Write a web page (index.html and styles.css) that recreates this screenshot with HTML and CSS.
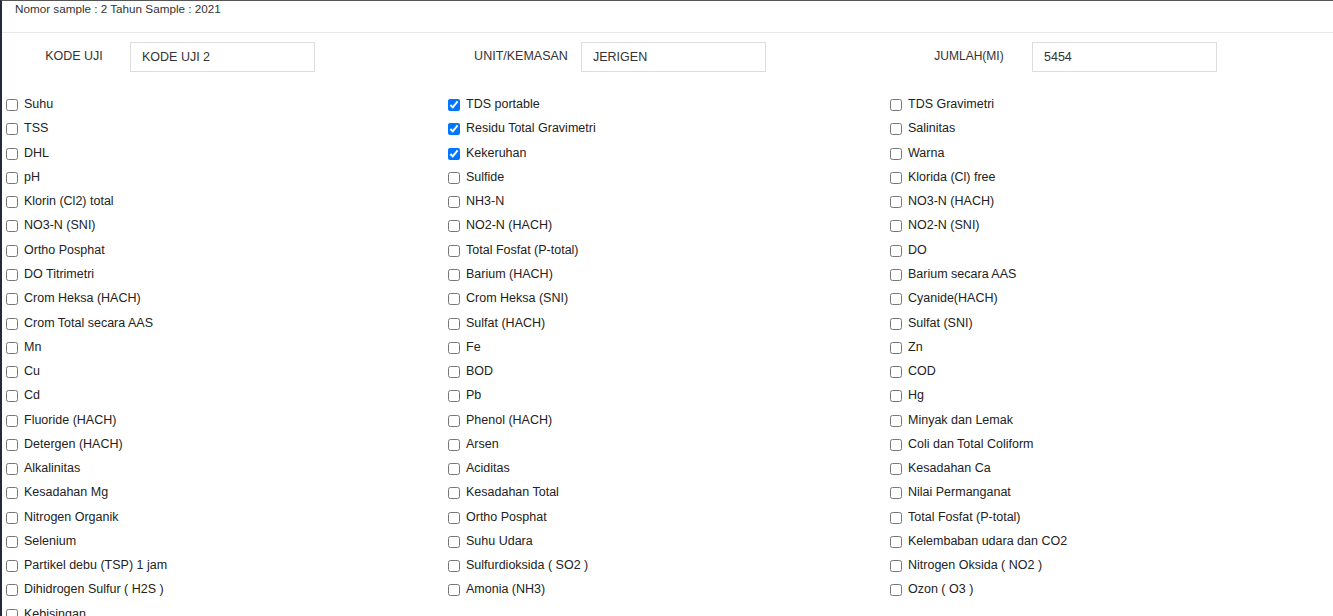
FILE: index.html
```html
<!DOCTYPE html>
<html>
<head>
<meta charset="utf-8">
<link rel="stylesheet" href="styles.css">
</head>
<body>
<div class="modal">
  <div class="modal-head">Nomor sample : 2 Tahun Sample : 2021</div>
  <div class="form-row">
    <div class="group"><span class="lbl">KODE UJI</span><input class="field" type="text" value="KODE UJI 2"></div>
    <div class="group group-mid"><span class="lbl">UNIT/KEMASAN</span><input class="field" type="text" value="JERIGEN"></div>
    <div class="group group-end"><span class="lbl">JUMLAH(MI)</span><input class="field" type="text" value="5454"></div>
  </div>
  <div class="checks">
    <label class="item"><input type="checkbox">Suhu</label>
    <label class="item"><input type="checkbox" checked>TDS portable</label>
    <label class="item"><input type="checkbox">TDS Gravimetri</label>
    <label class="item"><input type="checkbox">TSS</label>
    <label class="item"><input type="checkbox" checked>Residu Total Gravimetri</label>
    <label class="item"><input type="checkbox">Salinitas</label>
    <label class="item"><input type="checkbox">DHL</label>
    <label class="item"><input type="checkbox" checked>Kekeruhan</label>
    <label class="item"><input type="checkbox">Warna</label>
    <label class="item"><input type="checkbox">pH</label>
    <label class="item"><input type="checkbox">Sulfide</label>
    <label class="item"><input type="checkbox">Klorida (Cl) free</label>
    <label class="item"><input type="checkbox">Klorin (Cl2) total</label>
    <label class="item"><input type="checkbox">NH3-N</label>
    <label class="item"><input type="checkbox">NO3-N (HACH)</label>
    <label class="item"><input type="checkbox">NO3-N (SNI)</label>
    <label class="item"><input type="checkbox">NO2-N (HACH)</label>
    <label class="item"><input type="checkbox">NO2-N (SNI)</label>
    <label class="item"><input type="checkbox">Ortho Posphat</label>
    <label class="item"><input type="checkbox">Total Fosfat (P-total)</label>
    <label class="item"><input type="checkbox">DO</label>
    <label class="item"><input type="checkbox">DO Titrimetri</label>
    <label class="item"><input type="checkbox">Barium (HACH)</label>
    <label class="item"><input type="checkbox">Barium secara AAS</label>
    <label class="item"><input type="checkbox">Crom Heksa (HACH)</label>
    <label class="item"><input type="checkbox">Crom Heksa (SNI)</label>
    <label class="item"><input type="checkbox">Cyanide(HACH)</label>
    <label class="item"><input type="checkbox">Crom Total secara AAS</label>
    <label class="item"><input type="checkbox">Sulfat (HACH)</label>
    <label class="item"><input type="checkbox">Sulfat (SNI)</label>
    <label class="item"><input type="checkbox">Mn</label>
    <label class="item"><input type="checkbox">Fe</label>
    <label class="item"><input type="checkbox">Zn</label>
    <label class="item"><input type="checkbox">Cu</label>
    <label class="item"><input type="checkbox">BOD</label>
    <label class="item"><input type="checkbox">COD</label>
    <label class="item"><input type="checkbox">Cd</label>
    <label class="item"><input type="checkbox">Pb</label>
    <label class="item"><input type="checkbox">Hg</label>
    <label class="item"><input type="checkbox">Fluoride (HACH)</label>
    <label class="item"><input type="checkbox">Phenol (HACH)</label>
    <label class="item"><input type="checkbox">Minyak dan Lemak</label>
    <label class="item"><input type="checkbox">Detergen (HACH)</label>
    <label class="item"><input type="checkbox">Arsen</label>
    <label class="item"><input type="checkbox">Coli dan Total Coliform</label>
    <label class="item"><input type="checkbox">Alkalinitas</label>
    <label class="item"><input type="checkbox">Aciditas</label>
    <label class="item"><input type="checkbox">Kesadahan Ca</label>
    <label class="item"><input type="checkbox">Kesadahan Mg</label>
    <label class="item"><input type="checkbox">Kesadahan Total</label>
    <label class="item"><input type="checkbox">Nilai Permanganat</label>
    <label class="item"><input type="checkbox">Nitrogen Organik</label>
    <label class="item"><input type="checkbox">Ortho Posphat</label>
    <label class="item"><input type="checkbox">Total Fosfat (P-total)</label>
    <label class="item"><input type="checkbox">Selenium</label>
    <label class="item"><input type="checkbox">Suhu Udara</label>
    <label class="item"><input type="checkbox">Kelembaban udara dan CO2</label>
    <label class="item"><input type="checkbox">Partikel debu (TSP) 1 jam</label>
    <label class="item"><input type="checkbox">Sulfurdioksida ( SO2 )</label>
    <label class="item"><input type="checkbox">Nitrogen Oksida ( NO2 )</label>
    <label class="item"><input type="checkbox">Dihidrogen Sulfur ( H2S )</label>
    <label class="item"><input type="checkbox">Amonia (NH3)</label>
    <label class="item"><input type="checkbox">Ozon ( O3 )</label>
    <label class="item"><input type="checkbox">Kebisingan</label>
  </div>
</div>
</body>
</html>
```

FILE: styles.css
```css
html, body {
  margin: 0;
  padding: 0;
  background: #ffffff;
}
body {
  font-family: "Liberation Sans", Arial, sans-serif;
  font-size: 12px;
  color: #333333;
  overflow: hidden;
}
.modal {
  height: 100vh;
  border-top: 1px solid #555555;
  border-left: 2px solid #232a3b;
  box-sizing: border-box;
  overflow: hidden;
}
.modal-head {
  height: 32px;
  line-height: 16px;
  padding-left: 13px;
  border-bottom: 1px solid #e8e8e8;
  box-sizing: border-box;
  font-size: 11.7px;
  color: #333333;
}
.form-row {
  display: grid;
  grid-template-columns: 451px 451px 451px;
  padding-top: 9px;
}
.group {
  display: flex;
  align-items: center;
}
.lbl {
  width: 128px;
  margin-left: 8px;
  margin-right: -8px;
  text-align: center;
  color: #333333;
  font-size: 12.5px;
  margin-top: -3px;
}
.group-mid .lbl {
  margin-left: 4px;
  margin-right: -4px;
}
.group-end .lbl {
  margin-left: 1px;
  margin-right: -1px;
  font-size: 12px;
}
.field {
  width: 185px;
  height: 30px;
  box-sizing: border-box;
  border: 1px solid #dddddd;
  padding: 0 0 0 11px;
  margin: 0;
  font-family: "Liberation Sans", Arial, sans-serif;
  font-size: 12.5px;
  color: #333333;
  outline: none;
}
.checks {
  display: grid;
  grid-template-columns: 442px 442px 442px;
  grid-auto-rows: 24.28px;
  margin-top: 20px;
}
.item {
  display: flex;
  align-items: center;
  color: #222222;
  font-size: 12.5px;
  white-space: nowrap;
}
.item input {
  width: 12px;
  height: 12px;
  margin: 2px 6px 0 4px;
}
```
